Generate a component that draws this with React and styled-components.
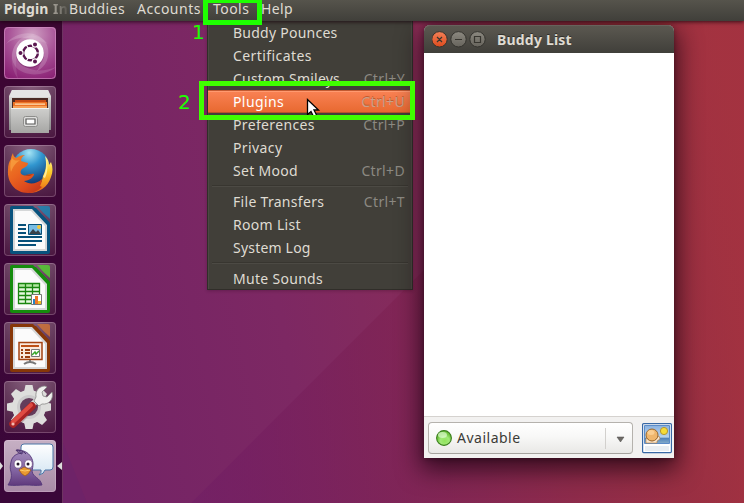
import React from 'react';
import styled, { createGlobalStyle, css } from 'styled-components';

const Global = createGlobalStyle`
  * { box-sizing: border-box; }
  body { margin: 0; overflow: hidden; font: 14px/20px "Noto Sans", sans-serif; }
`;

const Desktop = styled.div`
  position: relative;
  width: 744px;
  height: 503px;
  overflow: hidden;
  display: grid;
  grid-template: 21px 1fr / 63px 1fr;
`;

const Wallpaper = styled.svg`
  position: absolute;
  inset: 0;
`;

const TopBar = styled.header`
  grid-column: 1 / 3;
  position: relative;
  z-index: 1;
  display: flex;
  align-items: center;
  padding-left: 4px;
  background: linear-gradient(#56544c, #403f3a);
  box-shadow: 0 1px 4px rgba(20, 0, 10, 0.75);
  color: #dfdbd2;
`;

const BarLabel = styled.span`
  flex: none;
  width: ${(p) => p.$width}px;
  height: 20px;
  margin-top: -3px;
  white-space: pre;
  overflow: visible;
  letter-spacing: ${(p) => p.$spacing ?? 0.3}px;
  font-weight: ${(p) => (p.$bold ? 700 : 400)};
  ${(p) => p.$fade && css`
    overflow: hidden;
    background: linear-gradient(90deg, #a5a198, #504e48);
    background-clip: text;
    color: transparent;
  `}
`;

const Launcher = styled.nav`
  position: relative;
  display: flex;
  flex-direction: column;
  gap: 7px;
  padding: 6px 0 0 4px;
  background: linear-gradient(#3c0632, #3c0638 60%, #3a0739);
  border-right: 1px solid #6c3560;
`;

const Tile = styled.div`
  position: relative;
  flex: none;
  width: 52px;
  height: 52px;
  border-radius: 4px;
  overflow: hidden;
  background: ${(p) => p.$fill ?? 'radial-gradient(circle at 50% -10%, #8b6682 0, #64395b 48%, #4c1942 95%)'};
  box-shadow: inset 0 0 0 1px rgba(255, 220, 245, 0.23);
  svg { display: block; }
`;

const Marker = styled.svg`
  position: absolute;
  top: 441px;
  left: ${(p) => p.$left}px;
`;

const Workspace = styled.main`
  position: relative;
`;

const Menu = styled.div`
  position: absolute;
  left: 144px;
  top: 0;
  width: 206px;
  height: 269px;
  background: #413f39;
  border: solid #302e29;
  border-width: 0 1px 1px;
  box-shadow: inset 1px 0 #4b4943, inset -1px 0 #4b4943, 0 1px 3px rgba(30, 0, 20, 0.25);
  display: flex;
  flex-direction: column;
`;

const MenuRow = styled.div`
  flex: none;
  height: 23px;
  display: flex;
  align-items: center;
  justify-content: space-between;
  padding: 0 7px 0 25px;
  color: #dfdbd2;
  letter-spacing: ${(p) => p.$spacing ?? 0.3}px;
  ${(p) => p.$active && css`
    background: linear-gradient(#fa8356, #e7682f);
    box-shadow: inset 0 1px #c25a31, inset 0 2px #ff9a70, inset 0 -1px #b8532a;
    color: #fff;
  `}
`;

const Shortcut = styled.span`
  letter-spacing: 0.35px;
  color: ${(p) => (p.$active ? '#c9a08a' : '#8c8982')};
  text-shadow: ${(p) => (p.$active ? '0 -1px #c35a30' : 'none')};
`;

const MenuRule = styled.div`
  flex: none;
  height: 8px;
  padding: 3px 4px 0;
  &::before {
    content: '';
    display: block;
    height: 2px;
    background: linear-gradient(#383630 50%, #4c4a44 50%);
  }
`;

const Window = styled.section`
  position: absolute;
  left: 361px;
  top: 4px;
  width: 250px;
  height: 433px;
  display: flex;
  flex-direction: column;
  border-radius: 6px 6px 0 0;
  background: #f2f1f0;
  box-shadow: 0 8px 24px 3px rgba(20, 0, 12, 0.72), 0 1px 5px rgba(20, 0, 12, 0.35);
`;

const TitleBar = styled.div`
  flex: none;
  height: 28px;
  display: flex;
  align-items: center;
  padding: 0 8px;
  border-radius: 6px 6px 0 0;
  background: linear-gradient(#5c5951, #403f3a);
  box-shadow: inset 0 1px #6a675f;
  color: #dfdbd2;
`;

const WindowTitle = styled.span`
  margin: 2px 0 0 11px;
  font-weight: 700;
  letter-spacing: 0.2px;
  text-shadow: 0 -1px #2f2e2a;
`;

const Contents = styled.div`
  height: 363px;
  background: #fff;
`;

const StatusBar = styled.div`
  flex: 1;
  display: flex;
  align-items: flex-start;
  gap: 9px;
  padding: 5px 2px 0 4px;
  border-top: 1px solid #d5d2cf;
`;

const StatusSelect = styled.div`
  width: 205px;
  height: 32px;
  display: flex;
  align-items: center;
  gap: 5px;
  padding: 0 7px;
  border: 1px solid #b5b2ad;
  border-bottom-color: #a5a29e;
  border-radius: 4px;
  background: linear-gradient(#fff, #f8f8f7 45%, #e9e8e6);
  color: #3c3b37;
  letter-spacing: 0.5px;
`;

const StatusText = styled.span`
  flex: 1;
`;

const Divider = styled.span`
  width: 1px;
  height: 21px;
  margin-right: 5px;
  background: #d2d0cd;
`;

const Arrow = styled.svg`
  margin-top: 2px;
`;

const Highlight = styled.div`
  position: absolute;
  z-index: 2;
  left: ${(p) => p.$x}px;
  top: ${(p) => p.$y}px;
  width: ${(p) => p.$w}px;
  height: ${(p) => p.$h}px;
  border: 5px solid ${(p) => p.$color};
`;

const Step = styled.span`
  position: absolute;
  z-index: 2;
  left: ${(p) => p.$x}px;
  top: ${(p) => p.$y}px;
  font: 20px/24px "DejaVu Sans", sans-serif;
  color: #1eff00;
`;

const Pointer = styled.svg`
  position: absolute;
  left: 306px;
  top: 98px;
`;

const Backdrop = () => (
  <Wallpaper width="744" height="503" viewBox="0 0 744 503">
    <defs>
      <linearGradient id="sky" gradientUnits="userSpaceOnUse" x1="62" y1="290" x2="744" y2="150">
        <stop offset="0" stopColor="#732366" />
        <stop offset=".3" stopColor="#7d2863" />
        <stop offset=".53" stopColor="#872c59" />
        <stop offset=".8" stopColor="#98303f" />
        <stop offset="1" stopColor="#aa373b" />
      </linearGradient>
      <linearGradient id="fold" gradientUnits="userSpaceOnUse" x1="80" y1="480" x2="744" y2="400">
        <stop offset="0" stopColor="#6c206b" />
        <stop offset=".25" stopColor="#741e61" />
        <stop offset=".55" stopColor="#80234f" />
        <stop offset=".85" stopColor="#942d46" />
        <stop offset="1" stopColor="#a03043" />
      </linearGradient>
    </defs>
    <path fill="url(#sky)" d="M0 0h744v503H0z" />
    <path fill="url(#fold)" d="M191 503 424 270 744-50V503z" opacity=".65" />
    <path fill="#692569" d="M62 440 87 503H62z" opacity=".55" />
  </Wallpaper>
);

const Ubuntu = () => (
  <svg width="52" height="52" viewBox="0 0 52 52">
    <defs>
      <radialGradient id="swirl" cx=".55" cy=".15" r=".9">
        <stop offset="0" stopColor="#cf9fc2" />
        <stop offset=".5" stopColor="#a95498" />
        <stop offset="1" stopColor="#8b2275" />
      </radialGradient>
    </defs>
    <rect width="52" height="52" rx="4" fill="url(#swirl)" />
    <g fill="#fff">
      <path opacity=".18" d="M2 17C13 2 37 3 43 18c4 11-1 22-10 26 6-9 7-21 0-28C25 8 11 10 2 17z" />
      <path opacity=".15" d="M52 40c-12 10-33 10-41-1-6-9-3-20 5-26-4 10-3 20 6 27 8 5 20 4 30 0z" />
      <path opacity=".1" d="M14 52C4 38 6 16 20 10c10-4 19 0 24 7-10-5-22-4-28 5-6 10-4 20-2 30z" />
    </g>
    <circle cx="26" cy="27" r="14.2" fill="#59134c" opacity=".3" />
    <circle cx="26" cy="26" r="13.8" fill="#fff" />
    <circle cx="26.500" cy="26" r="7.300" fill="none" stroke="#5b1750" strokeWidth="2.600" />
    <g stroke="#fff" strokeWidth="1.200" fill="#5b1750">
      <path d="M26.500 26h12M26.500 26l-5-10M26.500 26l-5 10" />
      <circle cx="16.500" cy="26" r="2.600" /><circle cx="31" cy="17.500" r="2.600" /><circle cx="31" cy="34.500" r="2.600" />
    </g>
    <circle cx="26.500" cy="26" r="6" fill="#fff" />
    <rect x=".5" y=".5" width="51" height="51" rx="4" fill="none" stroke="#d08cc0" opacity=".7" />
  </svg>
);

const Files = () => (
  <svg width="52" height="52" viewBox="0 0 52 52">
    <defs>
      <linearGradient id="steel" x2="0" y2="1"><stop stopColor="#cfcfcd" /><stop offset="1" stopColor="#a6a6a4" /></linearGradient>
      <linearGradient id="cabinet" x2="0" y2="1"><stop stopColor="#f0f0ee" /><stop offset=".3" stopColor="#c6c6c4" /><stop offset="1" stopColor="#8b8b8b" /></linearGradient>
    </defs>
    <path d="M8 4h36l3 6v34H5V10z" fill="url(#cabinet)" />
    <path d="M8 4h36l2 7H6z" fill="#e5e5e4" />
    <path d="M8 12h36v11H8z" fill="#4a2a24" />
    <path d="M11 14h31v3H11z" fill="#c74a15" />
    <path d="M9 16h34v7H9z" fill="#ed7225" />
    <path d="M11 17.500h30v1.200H11z" fill="#ffe0b4" />
    <path d="M9 20h34v3H9z" fill="#f7a25a" />
    <path d="M7 22h38v25H7z" fill="url(#steel)" />
    <path d="M7 22.500h38" stroke="#f1f1ef" />
    <rect x="19.500" y="30.500" width="14" height="10" rx="2" fill="#dededd" stroke="#8d8d8b" />
    <path d="M22 33h9v5h-9z" fill="#fff" stroke="#575756" strokeWidth="1.200" />
  </svg>
);

const Firefox = () => (
  <svg width="52" height="52" viewBox="0 0 52 52">
    <defs>
      <radialGradient id="globe" cx=".45" cy=".1" r=".85"><stop stopColor="#a5e4f4" /><stop offset=".4" stopColor="#3196cf" /><stop offset="1" stopColor="#0d3470" /></radialGradient>
      <linearGradient id="fur" x1=".1" y1=".05" x2=".7" y2="1"><stop stopColor="#ee8127" /><stop offset=".45" stopColor="#ea6420" /><stop offset=".8" stopColor="#dd4a1d" /><stop offset="1" stopColor="#c93c1a" /></linearGradient>
      <linearGradient id="tail" x2="0" y2="1"><stop stopColor="#fff6a6" /><stop offset=".4" stopColor="#fbd02f" /><stop offset=".8" stopColor="#f08a1c" /><stop offset="1" stopColor="#dc531b" /></linearGradient>
    </defs>
    <circle cx="27" cy="23" r="19" fill="url(#globe)" />
    <path fill="url(#tail)" d="M41 11c3 3 4 6 4 9l2-3c2 5 2 10 0 15-3 10-12 16-22 16 8-4 13-9 14-17 3-6 4-12 2-20z" />
    <path fill="#fff7b0" opacity=".8" d="M42 14c2 6 2 13-1 19l-2-1c3-6 4-11 3-18z" />
    <path fill="url(#fur)" d="M9 8c0 2 1 4 3 5 3-2 6-3 9-3-2 1-4 3-4 6 2 1 4 1 7 2 0 3-3 4-6 6-2 2-2 5 1 6 4 2 7-2 11-1 0 3-5 7-10 7 5 4 13 3 18-2 0 3-1 5-2 7l2 1c-4 4-9 6-14 6C11 48 3 37 4 25c0-5 1-8 3-11 0-2 1-4 2-6z" />
    <path fill="#ffb34d" opacity=".55" d="M8 13c2 3 5 3 8 2-4 3-7 6-9 12-1-6-1-9 1-14z" />
    <path fill="#b13e17" d="m21 30 8-1c-2 2-5 3-8 1z" />
  </svg>
);

const Office = ({ tone, light, children }) => (
  <svg width="52" height="52" viewBox="0 0 52 52">
    <path d="M8 2h21l17 17v29q0 2-2 2H8q-2 0-2-2V4q0-2 2-2z" fill={tone} />
    <path d="M33 2h11q2 0 2 2v11q-7-6-13-13z" fill={light} opacity=".8" />
    <path d="M9 5h19l15 16v26H9z" fill="#d5d7d8" />
    <path d="M11 7h16l14 15v23H11z" fill="#fbfbfb" />
    <path d="m28 4 17 18v-4L32 4z" fill={tone} />
    {children}
  </svg>
);

const Writer = () => (
  <Office tone="#08527d" light="#1787b6">
    <path d="M14 21h8M14 25h8M14 29h8M14 33h24M14 37h24M14 41h18" stroke="#075079" strokeWidth="2" />
    <path d="M24.500 20.500h13v10h-13z" fill="#78bde4" stroke="#075079" />
    <path d="m25 30 4-5 3 3 2-2 3 4z" fill="#3a4148" /><circle cx="35" cy="23" r="2" fill="#f4c738" />
  </Office>
);

const Calc = () => (
  <Office tone="#158c0d" light="#52d52e">
    <path d="M14.500 20.500h21v20h-21z" fill="#e5f8df" />
    <path d="M14 20h22v4H14z" fill="#b1e7a0" />
    <path d="M14.500 20.500h21v20h-21zM14.500 24.500h21m-21 4h21m-21 4h21m-21 4h21m-14-16v20m7-20v20" fill="none" stroke="#18860e" strokeWidth="1.300" />
    <path d="M27.500 31.500h10v10h-10z" fill="#fff" stroke="#777" />
    <path d="M29 36h2v5h-2z" fill="#2684c4" /><path d="M31 33h3v8h-3z" fill="#ec7629" /><path d="M34 38h3v3h-3z" fill="#efbd28" />
  </Office>
);

const Impress = () => (
  <Office tone="#873708" light="#d17435">
    <path d="M15 20.500h23v17H15z" fill="#fae9dc" stroke="#a34210" strokeWidth="1.500" />
    <path d="M17 24h18" stroke="#bd5016" strokeWidth="2" />
    <path d="M17 28h2m2 0h5m-9 3h2m2 0h5m-9 4h2m2 0h5" stroke="#993e10" strokeWidth="2" />
    <path d="M27.500 27.500h8v7h-8z" fill="#fff" stroke="#777" />
    <path d="m28 33 3-3 1 2 3-3" fill="none" stroke="#37a629" strokeWidth="1.500" />
    <path d="M26 38v2M20 42q6-4 12 0" fill="none" stroke="#777" strokeWidth="2" />
  </Office>
);

const Settings = () => (
  <svg width="52" height="52" viewBox="0 0 52 52">
    <g fill="#dededc">
      {[0, 45, 90, 135].map((a) => <path key={a} d="m21.500 4-1.500 7v30l1.500 7h7l1.500-7V11l-1.500-7z" transform={`rotate(${a} 25 26)`} />)}
      <circle cx="25" cy="26" r="17" />
    </g>
    <circle cx="25" cy="26" r="12" fill="#cccbcc" />
    <circle cx="25" cy="26" r="9" fill="#643c5b" />
    <path d="M33 18 13 39" stroke="#5c2030" strokeWidth="7" strokeLinecap="round" opacity=".25" transform="translate(1 2)" />
    <path d="m28 24 9-9" stroke="#d6d6d4" strokeWidth="6" />
    <path d="M32 16c-1-6 3-11 9-11l2 1-5 5 1 4 4 1 5-5c2 7-3 13-10 12l-3 2-5-5z" fill="#efefed" stroke="#898988" strokeWidth=".8" />
    <path d="M28 25 9 43" stroke="#a92324" strokeWidth="7.500" strokeLinecap="round" />
    <path d="M27 24 9 41" stroke="#df4b42" strokeWidth="4" strokeLinecap="round" />
    <circle cx="9" cy="43" r="1.600" fill="#f3b9b0" />
  </svg>
);

const Pidgin = () => (
  <svg width="52" height="52" viewBox="0 0 52 52">
    <defs>
      <linearGradient id="bird" x2="0" y2="1"><stop stopColor="#a38bbb" /><stop offset=".6" stopColor="#8062a0" /><stop offset="1" stopColor="#60397c" /></linearGradient>
      <linearGradient id="bubble" x2="0" y2="1"><stop stopColor="#fff" /><stop offset="1" stopColor="#d5e6f3" /></linearGradient>
    </defs>
    <path d="M20 4h26q3 0 3 3v20q0 3-3 3h-5q-1 4-6 5 3-3 2-5H20q-3 0-3-3V7q0-3 3-3z" fill="url(#bubble)" stroke="#4b76a7" />
    <path d="M4 45c3-5 4-8 3-13-1-3-1-6 0-10 1-6 6-9 12-9-2-1-4-1-6-3 6 0 11 2 14 7 3 5 2 9 1 14 1 7 8 6 10 14-6 1-11 0-17 0s-11 1-17 0z" fill="url(#bird)" stroke="#55397a" strokeWidth=".9" />
    <path d="M18 14c-3-1-5-2-6-4 3 0 8 1 10 4" fill="none" stroke="#4b326b" />
    <ellipse cx="14" cy="24" rx="3.900" ry="4.200" fill="#fff" stroke="#725286" strokeWidth=".8" />
    <ellipse cx="24.500" cy="24" rx="3.900" ry="4.200" fill="#fff" stroke="#725286" strokeWidth=".8" />
    <circle cx="14" cy="24" r="1.500" fill="#24172e" /><circle cx="24" cy="24" r="1.500" fill="#24172e" />
    <path d="m15 30 5-3 7 3q-2 4-6 6-4-2-6-6z" fill="#e99a32" stroke="#985319" strokeWidth=".7" />
    <path d="m16 30 5 1 5-1" fill="none" stroke="#ffcb6a" />
  </svg>
);

const WindowControls = () => (
  <svg width="54" height="18" viewBox="0 0 54 18">
    <defs>
      <linearGradient id="close" x2="0" y2="1"><stop stopColor="#f38057" /><stop offset="1" stopColor="#dd4b1d" /></linearGradient>
      <linearGradient id="grey" x2="0" y2="1"><stop stopColor="#8c8980" /><stop offset="1" stopColor="#66635c" /></linearGradient>
    </defs>
    <g stroke="#33322d" strokeWidth="1">
      <circle cx="7.500" cy="9.300" r="7.700" fill="url(#close)" />
      <circle cx="26.500" cy="9.300" r="7.700" fill="url(#grey)" />
      <circle cx="45.500" cy="9.300" r="7.700" fill="url(#grey)" />
    </g>
    <g fill="none" stroke="#37352f" strokeWidth="1.200">
      <path d="m5 7 5 5m0-5-5 5M23 9.500h7" /><path d="M42.500 6.500h6v6h-6z" />
    </g>
  </svg>
);

const Presence = () => (
  <svg width="16" height="16" viewBox="0 0 16 16">
    <defs><radialGradient id="online" cx=".55" cy=".7"><stop stopColor="#91e45b" /><stop offset=".6" stopColor="#a1e878" /><stop offset="1" stopColor="#71c641" /></radialGradient></defs>
    <circle cx="8" cy="8" r="7.400" fill="url(#online)" stroke="#397d1c" strokeWidth="1.100" />
    <ellipse cx="6.500" cy="5" rx="4.500" ry="3" fill="#e0fbd2" opacity=".7" />
  </svg>
);

const BuddyIcon = () => (
  <svg width="30" height="32" viewBox="0 0 30 32">
    <defs><linearGradient id="scene" x2="0" y2="1"><stop stopColor="#8bb2e0" /><stop offset=".65" stopColor="#b7d3ec" /><stop offset=".7" stopColor="#4e81b9" /><stop offset="1" stopColor="#86adcc" /></linearGradient></defs>
    <rect x=".6" y="1.600" width="28.800" height="29" rx="1" fill="#fff" stroke="#3768a5" strokeWidth="1.200" />
    <path d="M2.500 3.500h25v18h-25z" fill="url(#scene)" stroke="#5c8cc8" />
    <path d="M4 21v-5l3 1 3 2 3-2 4-3 1 3-3 2v2z" fill="#f9e6ce" stroke="#b67c3b" strokeWidth=".6" />
    <circle cx="22" cy="9" r="3.600" fill="#f5dc38" stroke="#b49731" />
    <circle cx="10" cy="13" r="6" fill="#efb66c" stroke="#99672c" />
    <ellipse cx="9" cy="10.500" rx="3.500" ry="2.500" fill="#ffd9a1" opacity=".7" />
    <path d="M3 24h24v5H3z" fill="#e9eef3" />
  </svg>
);

const launcherItems = [
  { Icon: Ubuntu },
  { Icon: Files },
  { Icon: Firefox },
  { Icon: Writer },
  { Icon: Calc },
  { Icon: Impress },
  { Icon: Settings },
  { Icon: Pidgin, fill: 'linear-gradient(#c6b0c4, #a88aa6)' },
];

const menuItems = [
  { label: 'Buddy Pounces', spacing: 0.25 },
  { label: 'Certificates', spacing: 0.42 },
  { label: 'Custom Smileys', keys: 'Ctrl+Y', spacing: 0.22 },
  { label: 'Plugins', keys: 'Ctrl+U', active: true, spacing: 0.4 },
  { label: 'Preferences', keys: 'Ctrl+P', spacing: 0.35 },
  { label: 'Privacy', spacing: 0.4 },
  { label: 'Set Mood', keys: 'Ctrl+D', spacing: 0.3 },
  null,
  { label: 'File Transfers', keys: 'Ctrl+T' },
  { label: 'Room List' },
  { label: 'System Log', spacing: 0.2 },
  null,
  { label: 'Mute Sounds' },
];

export default function App() {
  return (
    <Desktop>
      <Global />
      <Backdrop />
      <TopBar>
        <BarLabel $width={49} $bold $spacing={0.1}>Pidgin</BarLabel>
        <BarLabel $width={16} $bold $fade>In</BarLabel>
        <BarLabel $width={68} $spacing={0.4}>Buddies</BarLabel>
        <BarLabel $width={76} $spacing={0.5}>Accounts</BarLabel>
        <BarLabel $width={48} $spacing={0.45}>Tools</BarLabel>
        <BarLabel $width={36} $spacing={0.4}>Help</BarLabel>
      </TopBar>
      <Launcher>
        {launcherItems.map(({ Icon, fill }, i) => (
          <Tile key={i} $fill={fill}><Icon /></Tile>
        ))}
        <Marker $left={0} width="4" height="8"><path d="M0 0 3 4 0 8z" fill="#ddd" /></Marker>
        <Marker $left={57} width="5" height="8"><path d="M5 0 0 4 5 8z" fill="#ddd" /></Marker>
      </Launcher>
      <Workspace>
        <Menu>
          {menuItems.map((item, i) =>
            item ? (
              <MenuRow key={i} $active={item.active} $spacing={item.spacing}>
                <span>{item.label}</span>
                {item.keys && <Shortcut $active={item.active}>{item.keys}</Shortcut>}
              </MenuRow>
            ) : <MenuRule key={i} />
          )}
        </Menu>
        <Window>
          <TitleBar>
            <WindowControls />
            <WindowTitle>Buddy List</WindowTitle>
          </TitleBar>
          <Contents />
          <StatusBar>
            <StatusSelect>
              <Presence />
              <StatusText>Available</StatusText>
              <Divider />
              <Arrow width="9" height="7"><path d="M1 1h7l-3.500 5z" fill="#6d6b67" stroke="#4d4b48" strokeWidth=".5" /></Arrow>
            </StatusSelect>
            <BuddyIcon />
          </StatusBar>
        </Window>
      </Workspace>
      <Pointer width="16" height="22" viewBox="0 0 16 22">
        <path d="M1.500 1.500v15l3.500-3 3 6 3-1.500-3-6h4.500z" fill="#fff" stroke="#000" strokeWidth="1.300" />
      </Pointer>
      <Highlight $x={203} $y={-2} $w={59} $h={27} $color="#1eff00" />
      <Highlight $x={199} $y={81} $w={216} $h={39} $color="#40ff00" />
      <Step $x={192} $y={20}>1</Step>
      <Step $x={178} $y={90}>2</Step>
    </Desktop>
  );
}
